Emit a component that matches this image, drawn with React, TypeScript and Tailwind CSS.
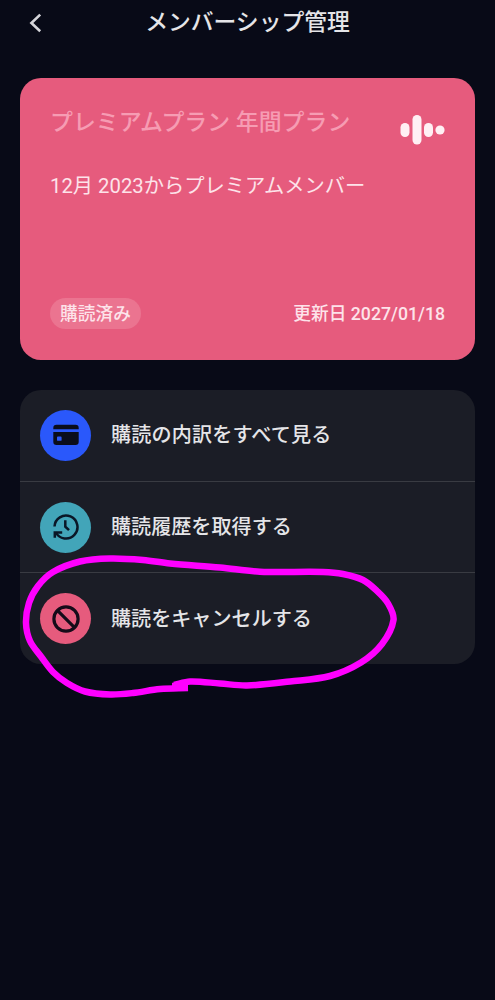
import type { ReactNode } from 'react';

type Point = [number, number];

const LOOP: Point[] = [
  [188, 688], [160, 689], [133, 693], [110, 694.5], [85, 691.5], [67, 683], [53, 672], [41, 656.5],
  [30, 641], [26, 623], [29, 603], [38, 586], [53, 572], [80, 561.5], [110, 558.5], [143, 560],
  [170, 563.5], [220, 567.5], [260, 571.7], [323, 572], [343, 574], [363, 580], [377, 591], [388, 603.5],
  [393.5, 620], [382, 644], [361, 662.5], [330, 676], [290, 681.5], [247, 685.5], [220, 683.5], [190, 681.5],
  [174, 685],
];

function smoothPath(points: Point[]) {
  let d = `M${points[0][0]} ${points[0][1]}`;
  for (let i = 0; i < points.length - 1; i++) {
    const before = points[Math.max(i - 1, 0)];
    const from = points[i];
    const to = points[i + 1];
    const after = points[Math.min(i + 2, points.length - 1)];
    const reach = Math.hypot(to[0] - from[0], to[1] - from[1]) / 3;
    const lenA = Math.hypot(to[0] - before[0], to[1] - before[1]);
    const lenB = Math.hypot(after[0] - from[0], after[1] - from[1]);
    d += `C${from[0] + ((to[0] - before[0]) / lenA) * reach} ${from[1] + ((to[1] - before[1]) / lenA) * reach}`;
    d += ` ${to[0] - ((after[0] - from[0]) / lenB) * reach} ${to[1] - ((after[1] - from[1]) / lenB) * reach}`;
    d += ` ${to[0]} ${to[1]}`;
  }
  return d;
}

function CardIcon() {
  return (
    <svg viewBox="0 0 26 22" className="h-[22px] w-[26px]" fill="#0a0d1c">
      <path d="M3.500.800h19A3.200 3.200 0 0 1 25.700 4V5.200H.3V4A3.200 3.200 0 0 1 3.500.8Z" />
      <path
        fillRule="evenodd"
        d="M.3 8.100h25.400v9.700a3.200 3.200 0 0 1-3.200 3.200h-19A3.200 3.200 0 0 1 .3 17.800ZM4.900 12.600h2.800a.9.9 0 0 1 .9.9v2.400a.9.9 0 0 1-.9.9H4.900a.9.9 0 0 1-.9-.9v-2.400a.9.9 0 0 1 .9-.9Z"
      />
    </svg>
  );
}

function HistoryIcon() {
  return (
    <svg viewBox="0 0 28 28" className="size-7" fill="none" stroke="#0a1727" strokeWidth="2.5">
      <path d="M2.500 13.500A11.500 11.500 0 1 1 3.700 19.200" />
      <path d="M2.800 24.800V19.500H10.200" />
      <path d="M13.300 7.300V13.600L17 17.200" />
    </svg>
  );
}

function CancelIcon() {
  return (
    <svg viewBox="0 0 28 28" className="size-7" fill="none" stroke="#160b19" strokeWidth="3.200">
      <circle cx="14" cy="14" r="12.100" />
      <path d="M5.600 5.600L22.400 22.400" />
    </svg>
  );
}

function Row({ icon, color, children }: { icon: ReactNode; color: string; children: ReactNode }) {
  return (
    <button className="flex flex-1 items-center gap-5 pl-5 text-left">
      <span className={`flex size-[51px] shrink-0 items-center justify-center rounded-full ${color}`}>{icon}</span>
      <span className="text-[20.1px] leading-6 font-medium whitespace-nowrap text-[#e5e5e8]">{children}</span>
    </button>
  );
}

export default function App() {
  return (
    <div
      lang="ja"
      className="relative flex h-[1000px] w-[495px] flex-col overflow-hidden bg-[#080a17] px-5 font-['Roboto','Noto_Sans_CJK_JP',sans-serif]"
    >
      <header className="grid h-[46px] grid-cols-[40px_1fr_40px] items-center">
        <button aria-label="戻る" className="pl-[9px]">
          <svg viewBox="0 0 14 22" className="h-[22px] w-[14px]" fill="none" stroke="#d5d5da" strokeWidth="2.600">
            <path d="M11.200 2.600L2.400 11L11.200 19.300" />
          </svg>
        </button>
        <h1 className="text-center text-[22.8px] leading-7 font-medium whitespace-nowrap text-[#e5e5e8]">
          メンバーシップ管理
        </h1>
      </header>

      <section className="mt-8 flex h-[282px] shrink-0 flex-col rounded-[21px] bg-[#e65b7d] px-[30px] pt-[31px] pb-[31px]">
        <div className="flex justify-between">
          <h2 className="text-[22.9px] leading-7 font-medium whitespace-nowrap text-[#f69cb3]">
            プレミアムプラン 年間プラン
          </h2>
          <svg viewBox="0 0 46 32" className="mt-[5px] h-8 w-[46px]" fill="#fff0f4">
            <rect x="1.500" y="9" width="9" height="14" rx="4.500" />
            <rect x="13.500" y="1" width="9" height="29.500" rx="4.500" />
            <rect x="25" y="9" width="9" height="14" rx="4.500" />
            <circle cx="41" cy="16" r="4.600" />
          </svg>
        </div>
        <p className="mt-[28px] text-[20.3px] leading-6 whitespace-nowrap text-[#fde3ea]">
          12月 2023からプレミアムメンバー
        </p>
        <div className="mt-auto flex h-[31px] items-center justify-between text-[17.7px] leading-6 font-medium text-[#fde3ea]">
          <span className="flex h-[31px] w-[91px] items-center justify-center rounded-full bg-[#eb7490]">購読済み</span>
          <span>更新日 2027/01/18</span>
        </div>
      </section>

      <nav className="mt-[30px] flex h-[274px] shrink-0 flex-col divide-y divide-[#393b42] rounded-[21px] bg-[#1b1d26]">
        <Row icon={<CardIcon />} color="bg-[#2a58fb]">
          <span className="tracking-[0.15px]">購読の内訳をすべて見る</span>
        </Row>
        <Row icon={<HistoryIcon />} color="bg-[#42a5b9]">購読履歴を取得する</Row>
        <Row icon={<CancelIcon />} color="bg-[#e65b7d]">購読をキャンセルする</Row>
      </nav>

      <svg
        viewBox="0 0 495 1000"
        className="pointer-events-none absolute inset-0 h-[1000px] w-[495px]"
        fill="none"
        stroke="#ff00ff"
        strokeWidth="6.500"
        strokeLinejoin="round"
      >
        <path d={smoothPath(LOOP)} />
        <path d="M172 686H188" />
      </svg>
    </div>
  );
}
